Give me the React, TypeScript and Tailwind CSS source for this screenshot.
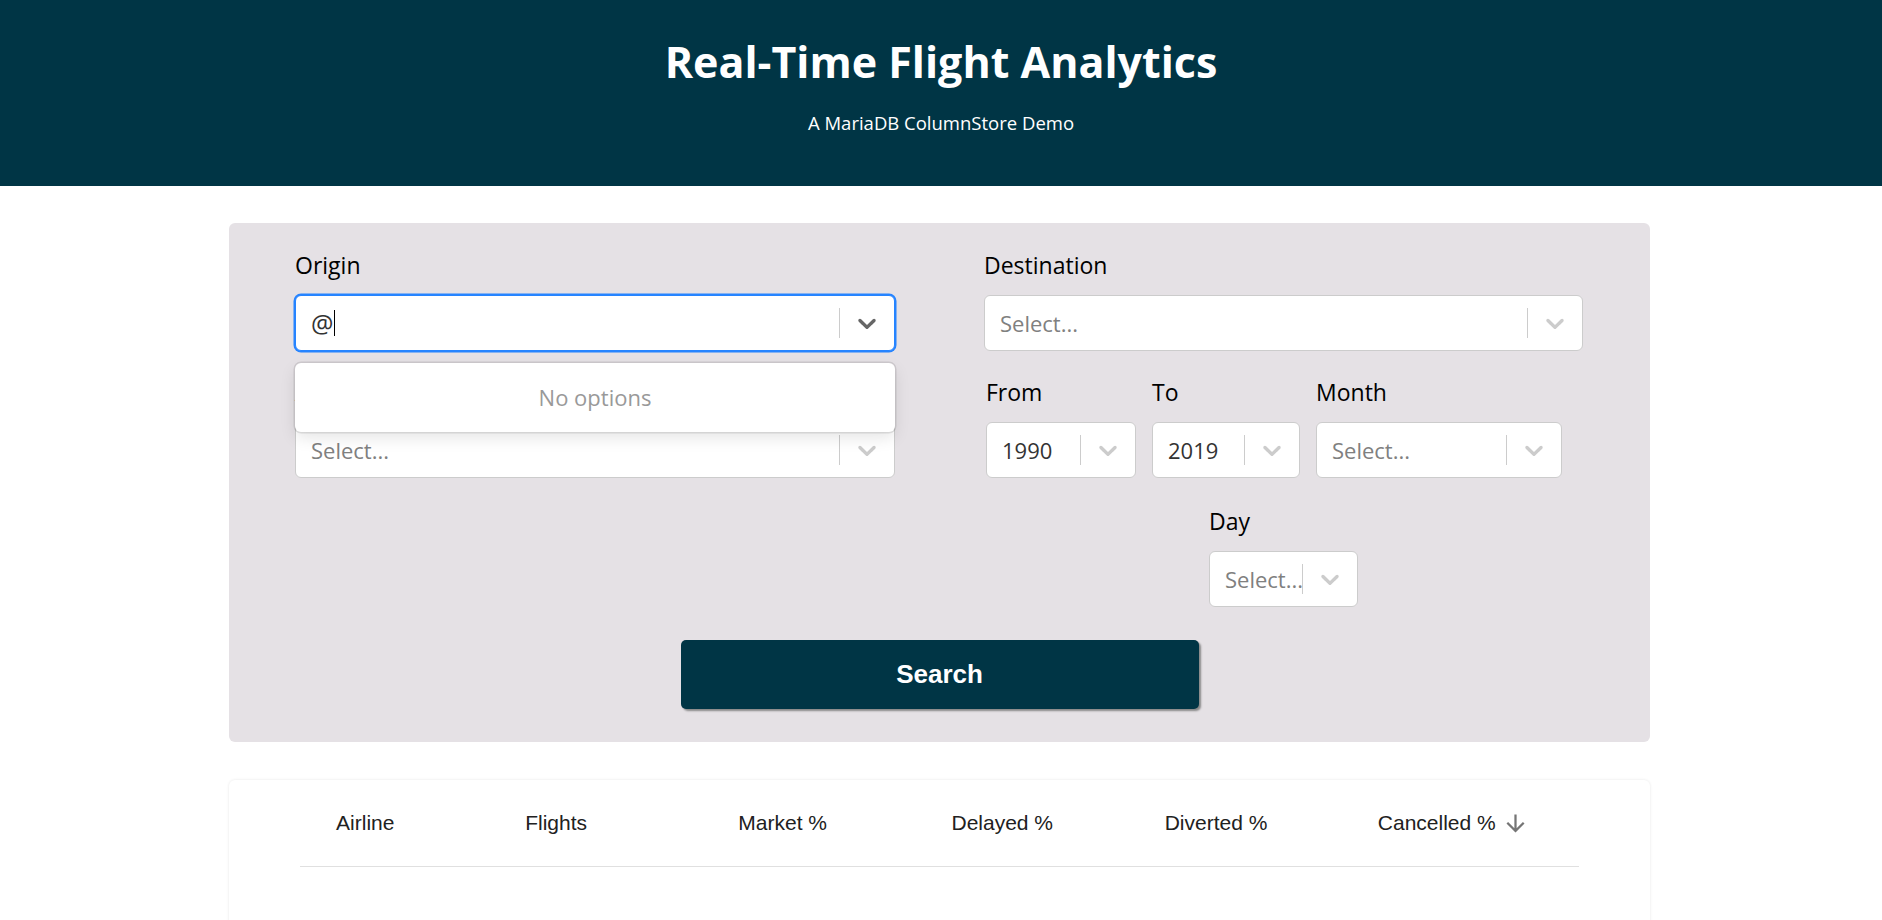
import React from "react";

const chevronPath =
  "M4.516 7.548c0.436-0.446 1.043-0.481 1.576 0l3.908 3.747 3.908-3.747c0.533-0.481 1.141-0.446 1.574 0 0.436 0.445 0.408 1.197 0 1.615-0.406 0.418-4.695 4.502-4.695 4.502-0.217 0.223-0.502 0.335-0.787 0.335s-0.57-0.112-0.789-0.335c0 0-4.287-4.084-4.695-4.502s-0.436-1.17 0-1.615z";

function Chevron({ dark }: { dark?: boolean }) {
  return (
    <svg
      viewBox="0 0 20 20"
      className={dark ? "h-[30px] w-[30px] fill-[#666]" : "h-[30px] w-[30px] fill-[#ccc]"}
    >
      <path d={chevronPath} />
    </svg>
  );
}

type SelectProps = {
  value?: string;
  placeholder?: string;
  focused?: boolean;
  width?: string;
  children?: React.ReactNode;
};

function Select({ value, placeholder = "Select...", focused, width = "w-full", children }: SelectProps) {
  return (
    <div
      className={`${width} flex h-[56px] items-center rounded-[6px] bg-white ${
        focused
          ? "border-[1.5px] border-[#2684ff] shadow-[0_0_0_1.5px_#2684ff]"
          : "border-[1.5px] border-[#ccc]"
      }`}
    >
      <div className="flex min-w-0 flex-1 items-center whitespace-nowrap pl-[15px] text-[22px] leading-[33px]">
        {children ? children : value ? <span className="text-[#333]">{value}</span> : <span className="text-[#808080]">{placeholder}</span>}
      </div>
      <span className="my-[12px] w-[1.5px] self-stretch bg-[#ccc]" />
      <div className="p-[12px]">
        <Chevron dark={focused} />
      </div>
    </div>
  );
}

function Field({ label, children, className = "" }: { label: string; children: React.ReactNode; className?: string }) {
  return (
    <div className={className}>
      <div className="h-[36px] text-[23px] leading-[36px] text-black">{label}</div>
      <div className="mt-[12px]">{children}</div>
    </div>
  );
}

const columns = ["Airline", "Flights", "Market %", "Delayed %", "Diverted %"];

export default function App() {
  return (
    <div className="min-h-screen bg-white font-['Open_Sans',sans-serif]">
      <header className="flex h-[186px] flex-col items-center bg-[#003545] pt-[34px] text-white">
        <h1 className="text-[43px] font-bold leading-[56px]">Real-Time Flight Analytics</h1>
        <p className="mt-[19px] text-[18.5px] leading-[28px]">A MariaDB ColumnStore Demo</p>
      </header>

      <section className="ml-[229px] mt-[37px] w-[1421px] rounded-[6px] bg-[#e5e1e5] pb-[33px] pt-[24px]">
        <div className="flex gap-[89px] px-[66px]">
          <div className="w-[600px]">
            <Field label="Origin">
              <div className="relative">
                <Select focused>
                  <span className="text-[25px] text-[#333]">@</span>
                  <span className="ml-[1px] h-[26px] w-[1px] bg-black" />
                </Select>
                <div className="absolute left-0 right-0 top-[calc(100%+12px)] z-10 rounded-[6px] bg-white py-[6px] shadow-[0_0_0_1.5px_rgba(0,0,0,0.1),0_6px_16px_rgba(0,0,0,0.1)]">
                  <div className="px-[18px] py-[12px] text-center text-[22px] leading-[33px] text-[#999]">No options</div>
                </div>
              </div>
            </Field>
            <Field label="Airline" className="mt-[23px]">
              <Select />
            </Field>
          </div>

          <div className="w-[599px]">
            <Field label="Destination">
              <Select />
            </Field>
            <div className="mt-[23px] flex gap-[16px] pl-[2px]">
              <Field label="From">
                <Select value="1990" width="w-[150px]" />
              </Field>
              <Field label="To">
                <Select value="2019" width="w-[148px]" />
              </Field>
              <Field label="Month">
                <Select width="w-[246px]" />
              </Field>
            </div>
            <div className="mt-[25px] flex justify-center">
              <Field label="Day">
                <Select width="w-[149px]" />
              </Field>
            </div>
          </div>
        </div>

        <button className="mx-auto mt-[33px] flex h-[69px] w-[518px] items-center justify-center rounded-[5px] bg-[#003545] font-['Liberation_Sans',Arial,sans-serif] text-[26px] font-bold text-white shadow-[2px_2px_2px_#888]">
          Search
        </button>
      </section>

      <section className="ml-[229px] mt-[38px] h-[220px] w-[1421px] rounded-[6px] bg-white shadow-[0_0_3px_rgba(0,0,0,0.1)]">
        <div className="mx-auto grid h-[87px] w-[90%] grid-cols-6 items-center border-b-[1.5px] border-[#e0e0e0] font-['Liberation_Sans',Arial,sans-serif] text-[21px] text-[#212121]">
          {columns.map((c, i) => (
            <div key={c} className={i === 0 ? "pl-[36px]" : "pl-[12px]"}>
              {c}
            </div>
          ))}
          <div className="flex items-center pl-[12px]">
            <span>Cancelled %</span>
            <svg viewBox="0 0 24 24" className="ml-[6px] h-[27px] w-[27px] fill-[#757575]">
              <path d="M20 12l-1.41-1.41L13 16.17V4h-2v12.17l-5.58-5.59L4 12l8 8 8-8z" />
            </svg>
          </div>
        </div>
      </section>
    </div>
  );
}
